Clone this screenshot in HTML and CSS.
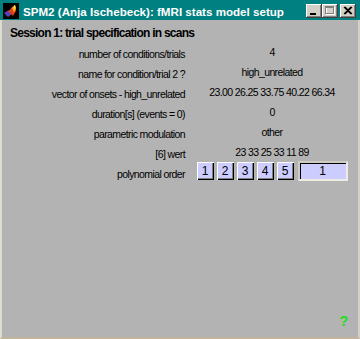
FILE: index.html
```html
<!DOCTYPE html>
<html>
<head>
<meta charset="utf-8">
<link rel="stylesheet" href="styles.css">
</head>
<body>
<div class="window">
  <div class="titlebar">
    <svg class="app-icon" width="16" height="16" viewBox="0 0 16 16">
      <rect width="16" height="16" fill="#000"/>
      <polygon points="1,10 6,7 9,11 5,14" fill="#6a3cb0"/>
      <polygon points="5,9 9,4 12,2 13,8 10,13 8,11" fill="#e04018"/>
      <polygon points="9,5 12,2 13,6 11,9" fill="#ffb020"/>
      <polygon points="11,3 12,2 12.6,5 11.5,6" fill="#fff070"/>
      <polygon points="3,11 6,9 7,11 4,13" fill="#3050c8"/>
    </svg>
    <span class="title">SPM2 (Anja Ischebeck): fMRI stats model setup</span>
    <div class="controls">
      <span class="ctl">
        <svg width="16" height="14" viewBox="0 0 16 14"><rect x="4" y="9" width="6" height="2" fill="#000"/></svg>
      </span>
      <span class="ctl">
        <svg width="16" height="14" viewBox="0 0 16 14">
          <rect x="4.5" y="3.5" width="8" height="7" fill="none" stroke="#fff"/>
          <rect x="3.5" y="2.5" width="8" height="7" fill="none" stroke="#808080"/>
          <rect x="3" y="3" width="9" height="1" fill="#808080"/>
        </svg>
      </span>
      <span class="ctl close">
        <svg width="16" height="14" viewBox="0 0 16 14">
          <path d="M4 3 L11 10 M5 3 L12 10 M11 3 L4 10 M12 3 L5 10" stroke="#000" stroke-width="1.1" fill="none"/>
        </svg>
      </span>
    </div>
  </div>
  <div class="client">
    <div class="heading">Session 1: trial specification in scans</div>
    <div class="rows">
      <div class="label">number of conditions/trials</div>
      <div class="value">4</div>
      <div class="label">name for condition/trial 2 ?</div>
      <div class="value">high_unrelated</div>
      <div class="label">vector of onsets - high_unrelated</div>
      <div class="value">23.00 26.25 33.75 40.22 66.34</div>
      <div class="label">duration[s] (events = 0)</div>
      <div class="value">0</div>
      <div class="label">parametric modulation</div>
      <div class="value">other</div>
      <div class="label">[6] wert</div>
      <div class="value">23 33 25 33 11 89</div>
      <div class="label">polynomial order</div>
      <div class="value choice-cell">
        <div class="choices">
          <span class="opt">1</span>
          <span class="opt">2</span>
          <span class="opt">3</span>
          <span class="opt">4</span>
          <span class="opt">5</span>
          <span class="entry">1</span>
        </div>
      </div>
    </div>
    <div class="footer"><span class="help">?</span></div>
  </div>
</div>
</body>
</html>
```
FILE: styles.css
```css
html, body {
  margin: 0;
  padding: 0;
  background: #b3b3b3;
}
.window {
  width: 360px;
  height: 339px;
  display: flex;
  flex-direction: column;
  overflow: hidden;
}
.titlebar {
  height: 20px;
  flex: none;
  background: #008080;
  display: flex;
  align-items: flex-start;
  padding: 0 4px 0 3px;
  box-sizing: border-box;
}
.app-icon {
  margin-top: 3px;
  flex: none;
}
.title {
  margin-left: 4px;
  padding-top: 4px;
  font-family: "Liberation Sans", Arial, sans-serif;
  font-weight: bold;
  font-size: 11.6px;
  line-height: 15px;
  color: #fff;
  white-space: nowrap;
  flex: 1;
}
.controls {
  display: flex;
  margin-top: 4px;
}
.ctl {
  width: 16px;
  height: 14px;
  background: #d4d0c8;
  box-shadow: inset -1px -1px #404040, inset 1px 1px #ffffff, inset -2px -2px #808080, inset 2px 2px #d4d0c8;
  display: block;
}
.ctl svg { display: block; }
.ctl.close { margin-left: 2px; }
.client {
  flex: 1;
  display: flex;
  flex-direction: column;
  border-left: 2px solid #dcdcd0;
  border-right: 2px solid #d4d0c8;
  border-bottom: 2px solid #c4b49c;
  font-family: "Liberation Sans", Arial, sans-serif;
  color: #000;
}
.heading {
  margin-top: 2px;
  height: 22px;
  line-height: 22px;
  padding-left: 8px;
  font-weight: bold;
  font-size: 12px;
  letter-spacing: -0.75px;
  white-space: nowrap;
}
.rows {
  display: grid;
  grid-template-columns: 184px 1fr;
  grid-auto-rows: 20px;
  font-size: 10.5px;
  letter-spacing: -0.6px;
}
.label {
  text-align: right;
  line-height: 20px;
  padding-right: 1px;
  white-space: nowrap;
}
.value {
  text-align: center;
  line-height: 16px;
  padding-bottom: 4px;
  white-space: nowrap;
}
.choice-cell {
  padding-bottom: 0;
}
.choices {
  display: flex;
  align-items: center;
  justify-content: center;
  height: 20px;
  margin-top: -3px;
  gap: 3px;
  letter-spacing: 0;
}
.opt {
  width: 17px;
  height: 18px;
  box-sizing: border-box;
  background: #ccccff;
  box-shadow: inset 1px 1px #ffffff, inset -1px -1px #000000, inset -2px -2px #808080;
  font-size: 12px;
  line-height: 18px;
  text-align: center;
}
.entry {
  margin-left: 1px;
  width: 50px;
  height: 20px;
  box-sizing: border-box;
  background: #ccccff;
  border: 2px solid;
  border-color: #d0ccc4 #ecece4 #ecece4 #d0ccc4;
  box-shadow: inset 1px 1px #000000;
  font-size: 12px;
  line-height: 16px;
  text-align: center;
}
.footer {
  margin-top: auto;
  display: flex;
  justify-content: flex-end;
  padding-right: 10px;
  margin-bottom: 9px;
}
.help {
  font-weight: bold;
  font-size: 15px;
  line-height: 15px;
  letter-spacing: -0.5px;
  color: #1be01b;
}
```
